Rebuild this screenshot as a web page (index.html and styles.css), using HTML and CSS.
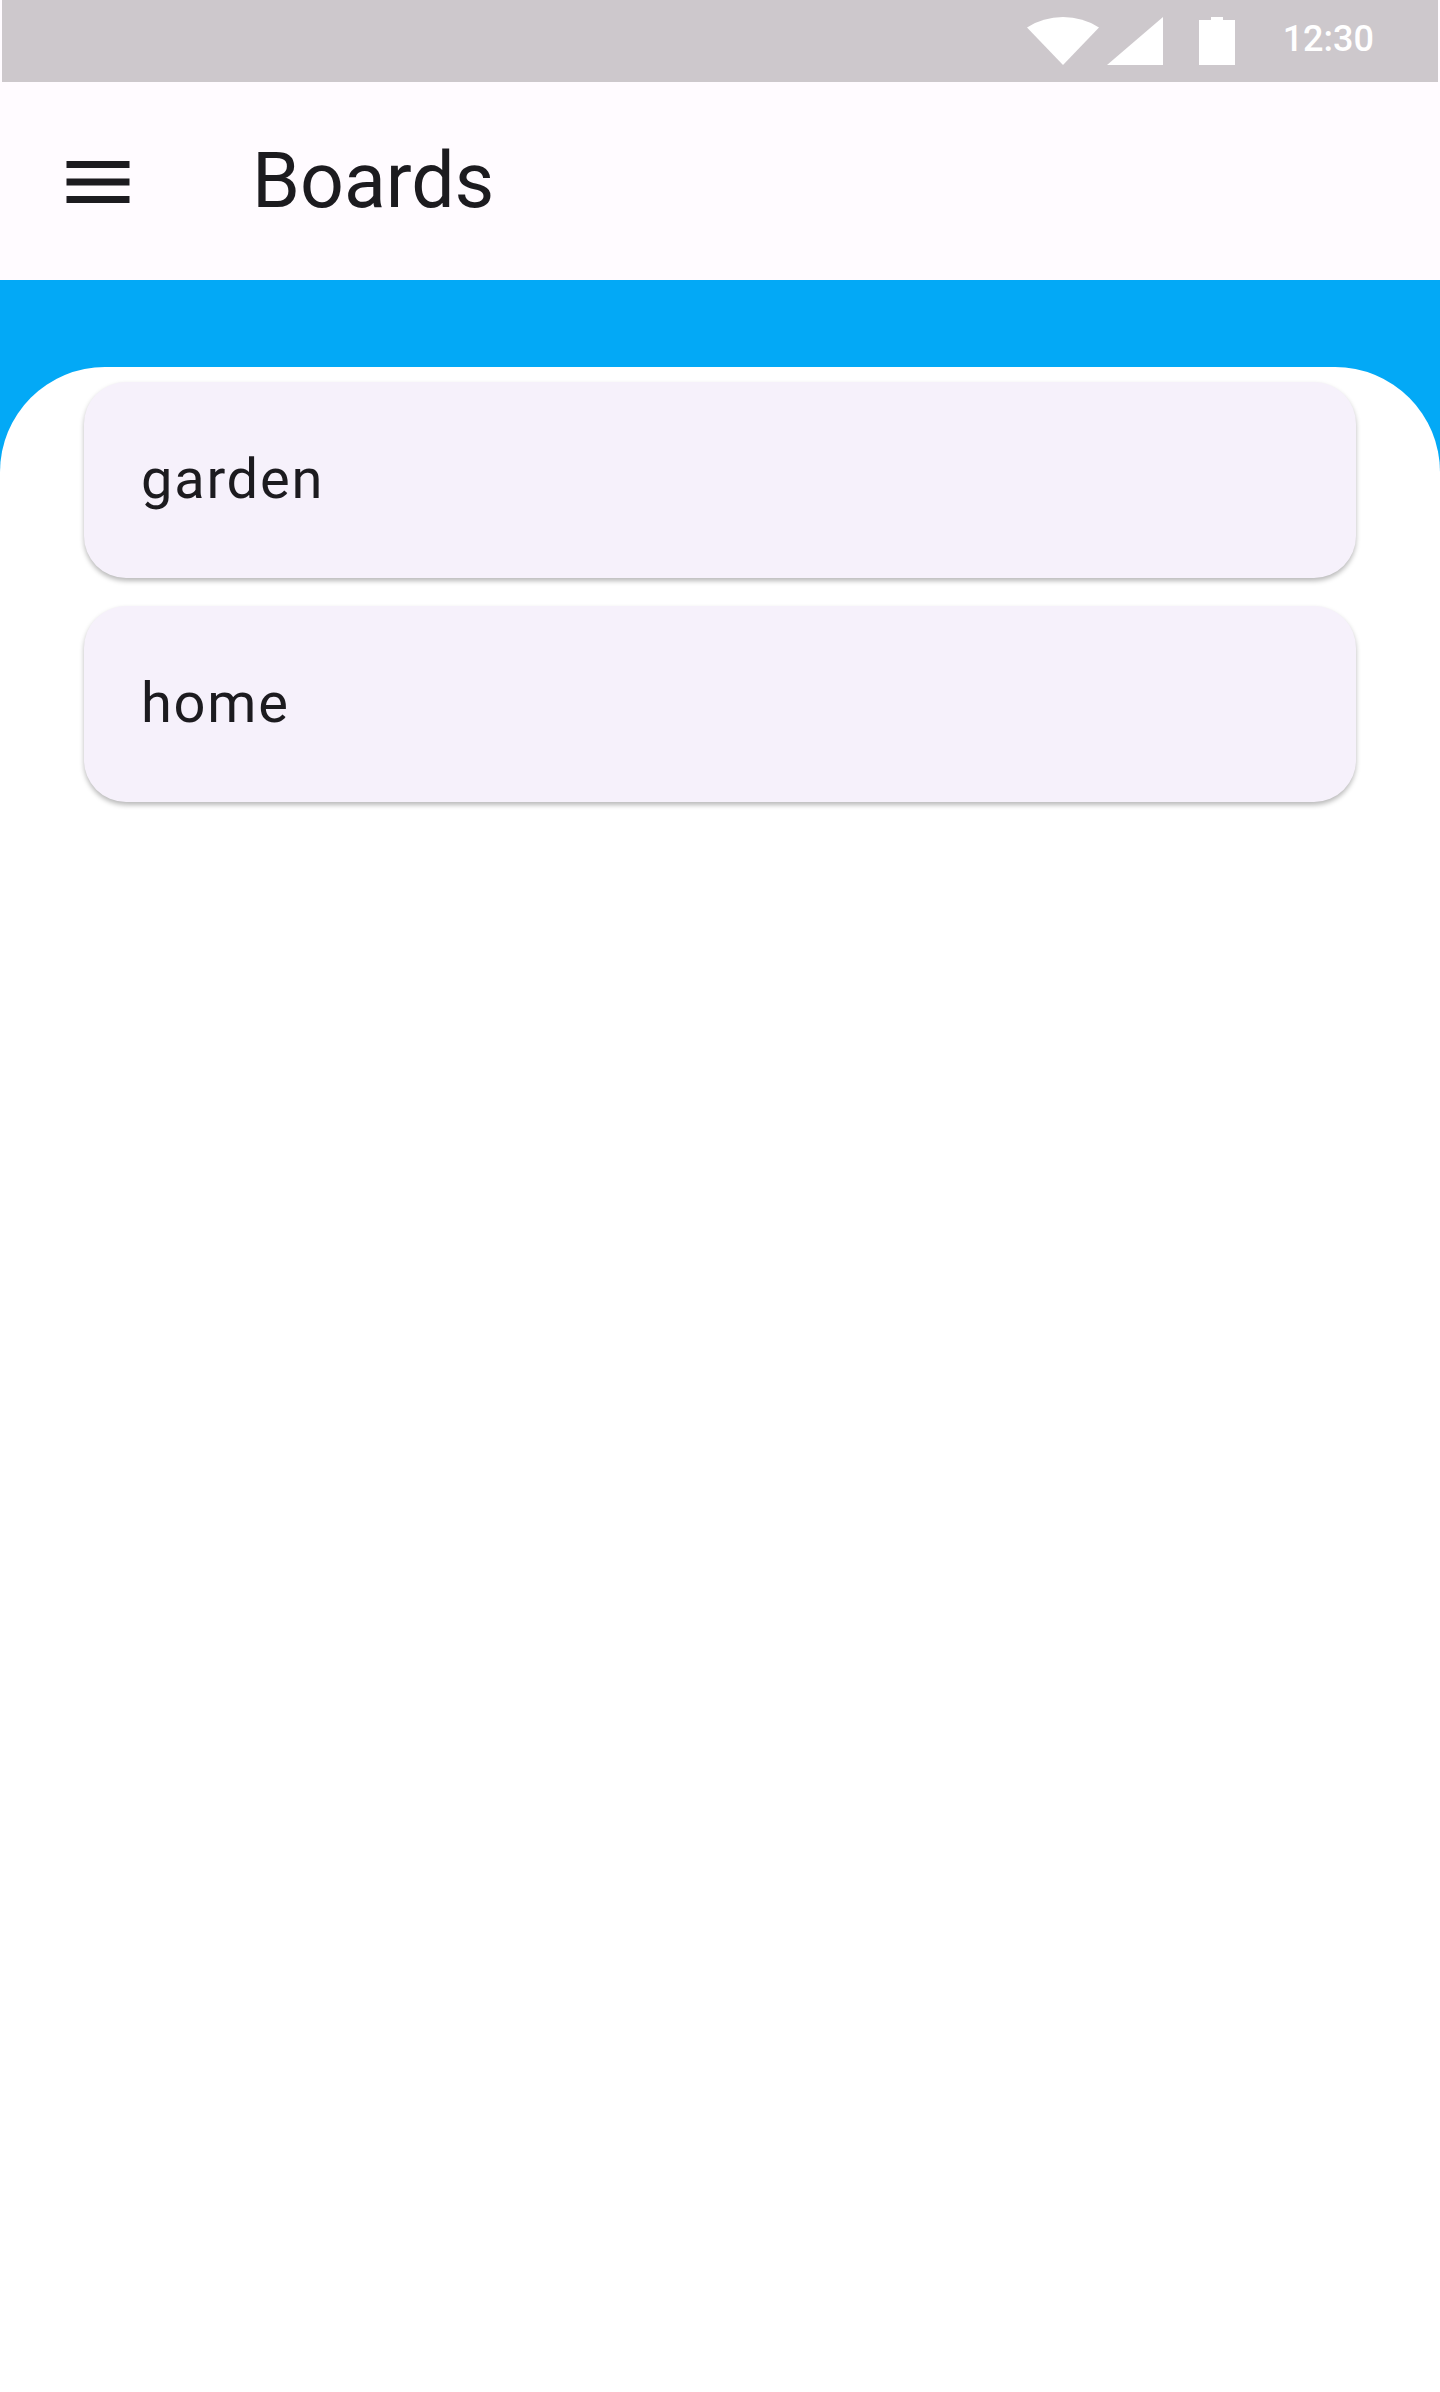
FILE: index.html
```html
<!DOCTYPE html>
<html lang="en">
<head>
<meta charset="utf-8">
<title>Boards</title>
<link rel="stylesheet" href="styles.css">
</head>
<body>
<header class="header">
  <div class="status-bar">
    <svg class="status-icons" viewBox="0 0 208 48" aria-hidden="true">
      <path d="M36 48 L0 10.5 Q16 0 36 0 Q56 0 72 10.5 Z"/>
      <path d="M80 48 L136 0 V48 Z"/>
      <path d="M172 3 H184 V0 H196 V3 H208 V48 H172 Z"/>
    </svg>
    <span class="clock">12:30</span>
  </div>
  <div class="app-bar">
    <svg class="menu-icon" viewBox="0 0 24 24" aria-hidden="true">
      <path d="M3 18h18v-2H3v2zm0-5h18v-2H3v2zm0-7v2h18V6H3z"/>
    </svg>
    <h1 class="title">Boards</h1>
  </div>
</header>
<main class="content">
  <section class="sheet">
    <div class="card">garden</div>
    <div class="card">home</div>
  </section>
</main>
</body>
</html>
```
FILE: styles.css
```css
* { box-sizing: border-box; }

body {
  margin: 0;
  min-height: 2392px;
  display: flex;
  flex-direction: column;
  font-family: Roboto, sans-serif;
  color: #1c1b1f;
  background: #fff;
}

.header {
  height: 280px;
  background: #fffbff;
}

.status-bar {
  height: 82px;
  margin: 0 2px;
  padding: 17px 64px 0 0;
  display: flex;
  justify-content: flex-end;
  align-items: flex-start;
  gap: 48px;
  background: #cdc8cc;
  color: #fff;
}

.status-icons {
  width: 208px;
  height: 48px;
  fill: currentColor;
}

.clock {
  font-size: 36px;
  font-weight: 500;
  line-height: 44px;
}

.app-bar {
  height: 198px;
  padding: 58px 56px 0;
  display: flex;
  align-items: flex-start;
  gap: 112px;
}

.menu-icon {
  width: 84px;
  height: 84px;
  fill: currentColor;
}

.title {
  margin: -8px 0 0;
  font-size: 77px;
  font-weight: 400;
  line-height: 98px;
}

.content {
  flex: 1;
  padding-top: 87px;
  display: flex;
  background: linear-gradient(#03a9f6 220px, #fff 220px);
}

.sheet {
  flex: 1;
  padding: 14.5px 84px 14px;
  display: flex;
  flex-direction: column;
  gap: 28px;
  background: #fff;
  border-radius: 105px 105px 0 0;
}

.card {
  height: 196px;
  padding: 55.5px 57px;
  font-size: 56px;
  line-height: 84px;
  letter-spacing: 1.75px;
  background: #f6f1fb;
  border-radius: 42px;
  box-shadow: 0 3px 5px rgba(0, 0, 0, 0.28);
}
```
